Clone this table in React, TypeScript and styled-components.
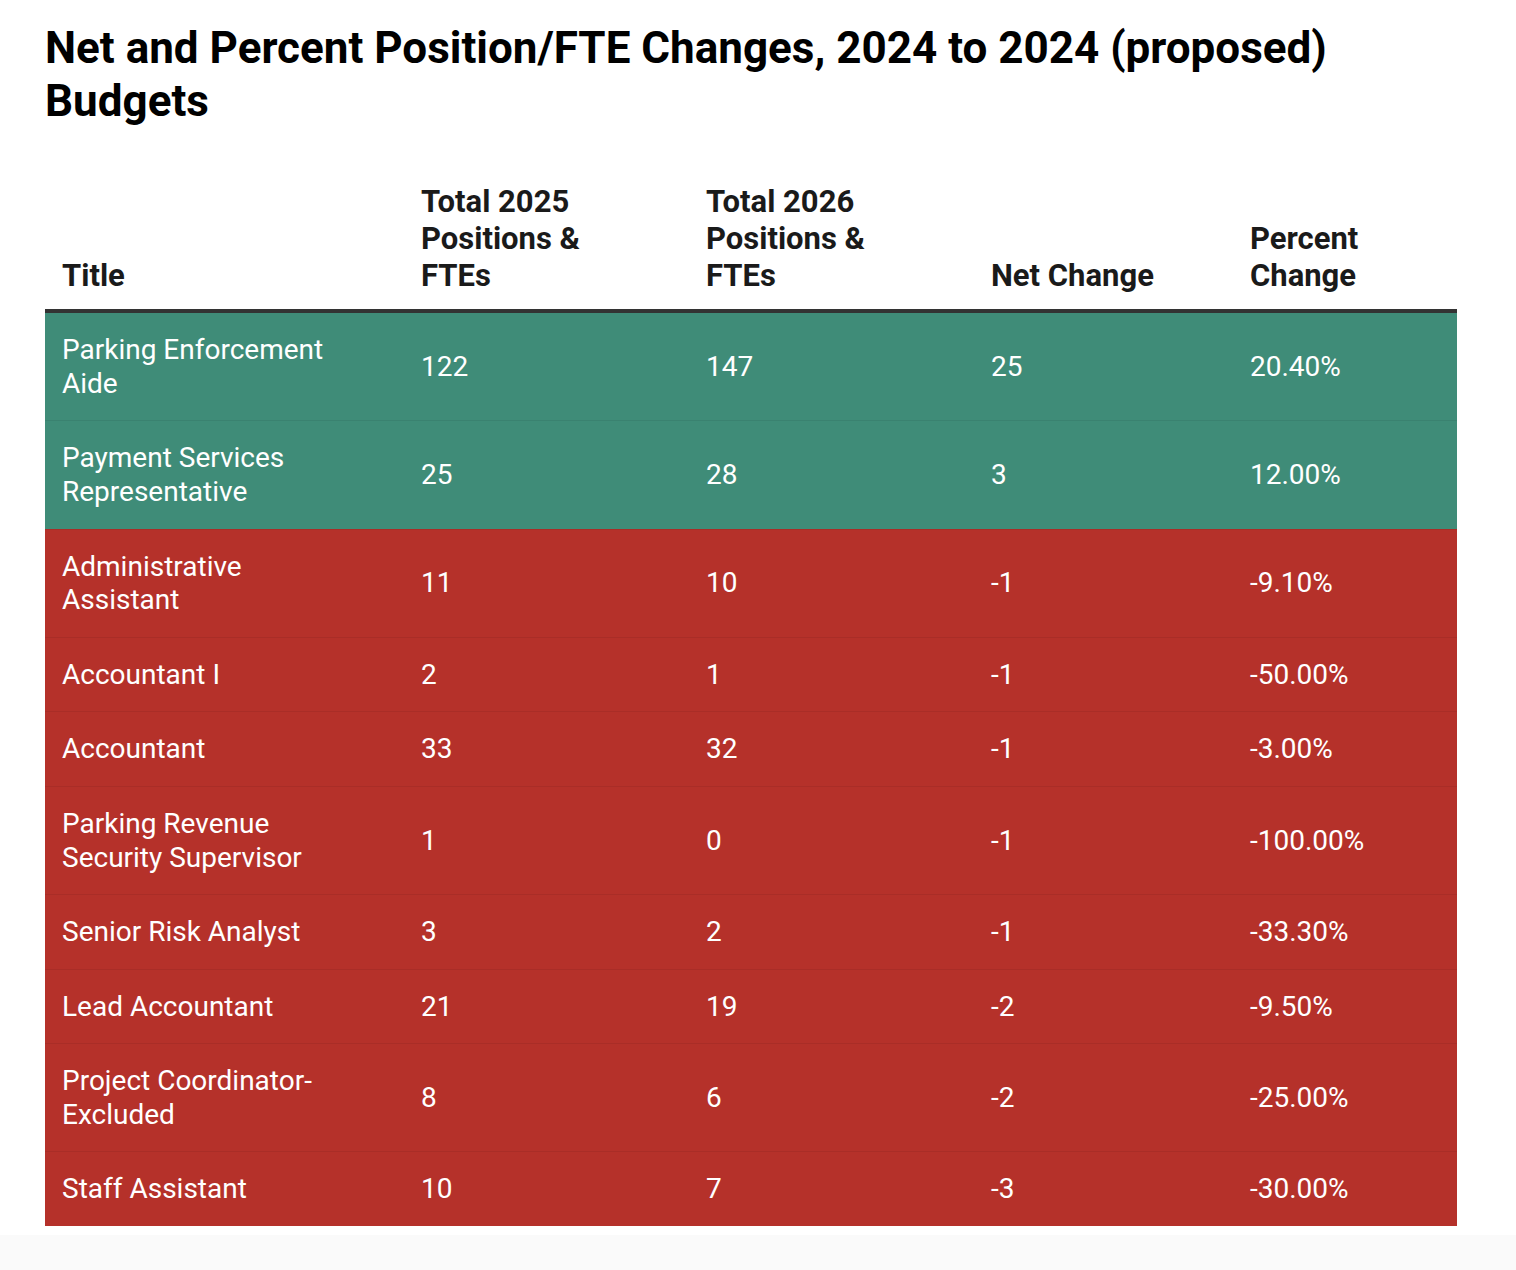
import * as React from 'react';
import styled, { createGlobalStyle } from 'styled-components';

type Row = {
  title: string;
  before: number;
  after: number;
  net: number;
  percent: string;
};

const rows: Row[] = [
  { title: 'Parking Enforcement Aide', before: 122, after: 147, net: 25, percent: '20.40%' },
  { title: 'Payment Services Representative', before: 25, after: 28, net: 3, percent: '12.00%' },
  { title: 'Administrative Assistant', before: 11, after: 10, net: -1, percent: '-9.10%' },
  { title: 'Accountant I', before: 2, after: 1, net: -1, percent: '-50.00%' },
  { title: 'Accountant', before: 33, after: 32, net: -1, percent: '-3.00%' },
  { title: 'Parking Revenue Security Supervisor', before: 1, after: 0, net: -1, percent: '-100.00%' },
  { title: 'Senior Risk Analyst', before: 3, after: 2, net: -1, percent: '-33.30%' },
  { title: 'Lead Accountant', before: 21, after: 19, net: -2, percent: '-9.50%' },
  { title: 'Project Coordinator-Excluded', before: 8, after: 6, net: -2, percent: '-25.00%' },
  { title: 'Staff Assistant', before: 10, after: 7, net: -3, percent: '-30.00%' },
];

const columns = [
  { label: 'Title', width: 359 },
  { label: 'Total 2025 Positions & FTEs', width: 285 },
  { label: 'Total 2026 Positions & FTEs', width: 285 },
  { label: 'Net Change', width: 259 },
  { label: 'Percent Change', width: 224 },
];

export default function App() {
  return (
    <Page>
      <GlobalStyle />
      <Heading>Net and Percent Position/FTE Changes, 2024 to 2024 (proposed) Budgets</Heading>
      <Table>
        <colgroup>
          {columns.map((c) => (
            <col key={c.label} style={{ width: c.width }} />
          ))}
        </colgroup>
        <thead>
          <tr>
            {columns.map((c) => (
              <HeadCell key={c.label}>{c.label}</HeadCell>
            ))}
          </tr>
        </thead>
        <tbody>
          {rows.map((r) => (
            <BodyRow key={r.title} $up={r.net > 0}>
              <Cell>{r.title}</Cell>
              <Cell>{r.before}</Cell>
              <Cell>{r.after}</Cell>
              <Cell>{r.net}</Cell>
              <Cell>{r.percent}</Cell>
            </BodyRow>
          ))}
        </tbody>
      </Table>
    </Page>
  );
}

const GlobalStyle = createGlobalStyle`
  html, body {
    margin: 0;
    padding: 0;
    background: #fafafa;
  }
  body {
    font-family: Roboto, "Liberation Sans", sans-serif;
    color: #111;
  }
`;

const Page = styled.div`
  background: #fff;
  padding: 22px 59px 8px 45px;
  min-height: 1235px;
  box-sizing: border-box;
`;

const Heading = styled.h1`
  margin: 0 0 43px;
  font-size: 44px;
  line-height: 1.2;
  font-weight: 700;
  color: #000;
  max-width: 1320px;
`;

const Table = styled.table`
  width: 1412px;
  border-collapse: collapse;
  table-layout: fixed;
`;

const HeadCell = styled.th`
  text-align: left;
  vertical-align: bottom;
  font-size: 31px;
  line-height: 1.2;
  font-weight: 700;
  color: #1a1a1a;
  padding: 12px 55px 15px 17px;
  border-bottom: 4px solid #333;
`;

const BodyRow = styled.tr<{ $up: boolean }>`
  background: ${(p) => (p.$up ? '#3f8c78' : '#b5312a')};
  border-top: 1px solid ${(p) => (p.$up ? '#3a8270' : '#a92d27')};
  &:first-child {
    border-top: none;
  }
`;

const Cell = styled.td`
  color: #fff;
  font-size: 28px;
  line-height: 1.2;
  padding: 20px 55px 20px 17px;
  vertical-align: middle;
`;
